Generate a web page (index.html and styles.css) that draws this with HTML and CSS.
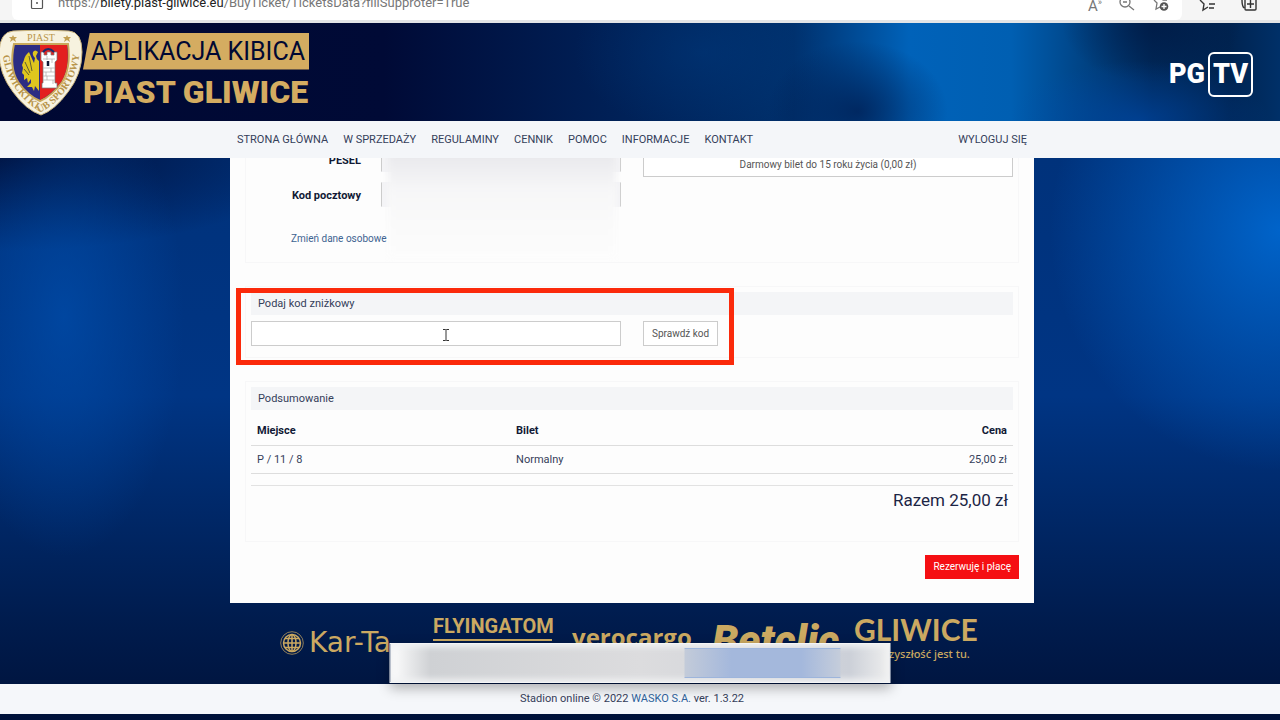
FILE: index.html
```html
<!DOCTYPE html>
<html lang="pl">
<head>
    <meta charset="UTF-8">
    <meta name="viewport" content="width=device-width, initial-scale=1.0">
    <title>Bilety - Piast Gliwice</title>
    <link rel="stylesheet" href="styles.css">
</head>
<body>

    <div class="browser-bar">
        <div class="address">
            <svg class="lock" width="14" height="16" viewBox="0 0 14 16" fill="none" stroke="#555" stroke-width="1.2">
                <path d="M1.5 3v10.5q0 1 1 1h9q1 0 1-1V3"/>
                <circle cx="7" cy="9" r="1" fill="#555" stroke="none"/>
            </svg>
            <span class="url">https://<b>bilety.piast-gliwice.eu</b>/BuyTicket/TicketsData?fillSupproter=True</span>
            <div class="address-icons">
                <span class="read-aloud">A<sup>»</sup></span>
                <svg width="18" height="18" viewBox="0 0 18 18" fill="none" stroke="#777" stroke-width="1.3">
                    <circle cx="7" cy="8" r="5"/><path d="M5 8h4M11 12l5 4"/>
                </svg>
                <svg width="18" height="18" viewBox="0 0 18 18" fill="none" stroke="#777" stroke-width="1.3">
                    <path d="M2 6l3 3-1 6 4-2M9 2l2 4h4"/><circle cx="12" cy="12.5" r="4.3" fill="#555" stroke="none"/><path d="M12 10v5M9.500 12.500h5" stroke="#fff"/>
                </svg>
            </div>
        </div>
        <div class="toolbar-icons">
            <svg width="18" height="18" viewBox="0 0 18 18" fill="none" stroke="#333" stroke-width="1.4">
                <path d="M2 6l4 4-1 6 5-3M11 10h6M11 14h5"/>
            </svg>
            <svg width="18" height="18" viewBox="0 0 18 18" fill="none" stroke="#333" stroke-width="1.4">
                <path d="M5 4h11v11q0 1-1 1H6q-1 0-1-1zM10.500 6v8M7 10h7M2 6q0 6 2 8"/>
            </svg>
        </div>
    </div>

    <header class="banner">
        <div class="brand">
            <svg class="crest" width="83" height="86" viewBox="0 0 83 86">
                <path d="M13 1Q41-1 69 1Q82 2 82 22Q82 44 68 62Q55 80 41 85Q26 80 13 62Q-1 44-1 22Q0 2 13 1Z" fill="#f7f2df" stroke="#c9b27a"/>
                <path d="M14 14H68Q71 38 62 52Q52 66 40 71Q28 66 18 52Q9 38 14 14Z" fill="#2b2c83" stroke="#c9a95b" stroke-width="2"/>
                <path d="M40 15H67Q70 38 61 52Q51 65 40 70Z" fill="#e3201f"/>
                <path d="M38 22q-3-3-5 0q-1 3 2 6l-1 5q-2-4-5-11q-4 3-5 8l-2 5 1 3-1 5 2 2 0 5 3-2 1 5 3-4 0 4-4 4 5 0 2 4 1-5 4 5V31q-3-2-3-5z" fill="#dfc61e"/>
                <path d="M29 26l3 15M25 32l5 11M24 39l5 6" stroke="#625d31" fill="none"/>
                <path d="M41 30v-8h3v3h3v-3h4v3h3v-3h3v8l-2 2v21h2v5H42v-5h1V32z" fill="#fff" stroke="#777" stroke-width=".7"/>
                <path d="M43 22q5-6 11 0" fill="none" stroke="#1a2c69" stroke-width="2"/>
                <path d="M43 29h12M43 38h12M43 42h12M43 46h12M43 50h12M47 26v4M52 29v4M46 42v4M51 38v4M47 46v4M53 50v4" stroke="#aaa" stroke-width=".7"/>
                <path d="M48 31v5" stroke="#101938" stroke-width="2.500"/>
                <path id="crest-arc" d="M2 15Q3 43 18 62Q29 76 41 82Q54 76 66 60Q80 40 80 14" fill="none"/>
                <text x="41" y="11" class="crest-name">PIAST</text>
                <text class="crest-club"><textPath href="#crest-arc" startOffset="50%">GLIWICKI KLUB SPORTOWY</textPath></text>
                <path d="M13 5l1 2h3l-2 2 1 3-3-2-3 2 1-3-2-2h3zM67 5l1 2h3l-2 2 1 3-3-2-3 2 1-3-2-2h3z" fill="#c2a053"/>
            </svg>
            <div class="brand-title">
                <span class="brand-app">APLIKACJA KIBICA</span>
                <span class="brand-club">PIAST GLIWICE</span>
            </div>
        </div>
        <div class="pgtv"><span>PG</span><span class="tv">TV</span></div>
    </header>

    <nav class="menu">
        <div class="menu-inner">
            <a href="#">STRONA GŁÓWNA</a>
            <a href="#">W SPRZEDAŻY</a>
            <a href="#">REGULAMINY</a>
            <a href="#">CENNIK</a>
            <a href="#">POMOC</a>
            <a href="#">INFORMACJE</a>
            <a href="#">KONTAKT</a>
            <a href="#" class="logout">WYLOGUJ SIĘ</a>
        </div>
    </nav>

    <main class="card">
        <section class="panel panel-person">
            <div class="person">
                <label for="pesel">PESEL</label>
                <input type="text" id="pesel">
                <label for="zip">Kod pocztowy</label>
                <input type="text" id="zip">
                <div class="haze"></div>
                <a href="#" class="edit-link">Zmień dane osobowe</a>
            </div>
            <button class="btn ticket-type">Darmowy bilet do 15 roku życia (0,00 zł)</button>
        </section>

        <section class="panel panel-code">
            <div class="panel-title"><label for="code">Podaj kod zniżkowy</label></div>
            <div class="code-row">
                <input type="text" id="code">
                <button class="btn">Sprawdź kod</button>
            </div>
            <div class="highlight"></div>
            <svg class="cursor" width="8" height="14" viewBox="0 0 8 14" fill="none" stroke="#333">
                <path d="M1 1.500h2.500l.5.500.5-.500H7M4 2v10M1 12.500h2.500l.5-.500.5.500H7"/>
            </svg>
        </section>

        <section class="panel panel-summary">
            <div class="panel-title">Podsumowanie</div>
            <table>
                <thead>
                    <tr><th>Miejsce</th><th>Bilet</th><th class="price">Cena</th></tr>
                </thead>
                <tbody>
                    <tr><td>P / 11 / 8</td><td>Normalny</td><td class="price">25,00 zł</td></tr>
                </tbody>
            </table>
            <div class="total">Razem 25,00 zł</div>
        </section>

        <div class="actions">
            <button class="btn btn-pay">Rezerwuję i płacę</button>
        </div>
    </main>

    <div class="sponsors">
        <div class="karta">
            <svg width="24" height="24" viewBox="0 0 24 24" fill="none" stroke="#cba961">
                <circle cx="12" cy="12" r="11.300" stroke-width=".7"/>
                <g stroke-width="1.500"><circle cx="12" cy="12" r="8.500"/><ellipse cx="12" cy="12" rx="4" ry="8.500"/><path d="M12 3v18M3 12h18M5 7.500h14M5 16.500h14"/></g>
            </svg>
            <span>Kar-Ta</span>
        </div>
        <div class="flyingatom">FLYINGATOM</div>
        <div class="verocargo">verocargo</div>
        <div class="betclic">Betclic</div>
        <div class="gliwice">GLIWICE<small>Przyszłość jest tu.</small></div>
    </div>

    <footer>
        <p>Stadion online © 2022 <a href="#">WASKO S.A.</a> ver. 1.3.22</p>
    </footer>

    <div class="share-bar"><div class="share-blue"></div></div>

</body>
</html>
```

FILE: styles.css
```css
* {
    margin: 0;
    padding: 0;
    box-sizing: border-box;
}

body {
    min-height: 100vh;
    font-family: Roboto, "Noto Sans", sans-serif;
    font-size: 11px;
    line-height: 16px;
    color: #35405a;
    background:
        radial-gradient(ellipse 230px 240px at 100% 32%, rgba(0, 108, 215, 0.85), transparent),
        radial-gradient(ellipse 120px 240px at 5% 44%, rgba(0, 82, 180, 0.6), transparent),
        radial-gradient(ellipse 320px 100px at 0% 21%, rgba(0, 5, 40, 0.8), transparent),
        linear-gradient(#003075, #003584 55%, #001c4e 86%, #00123a);
}

a {
    color: inherit;
    text-decoration: none;
}

/* browser strip */
.browser-bar {
    height: 23px;
    display: flex;
    background: #f5f5f5;
    border-bottom: 3px solid #e2e4e6;
    overflow: hidden;
}

.address {
    flex: 1;
    display: flex;
    margin-left: 12px;
    padding: 0 12px 0 18px;
    background: #fff;
    border-radius: 0 0 6px 6px;
}

.lock {
    margin-top: -6px;
}

.url {
    margin: -5px auto 0 14px;
    font-size: 13px;
    color: #777;
}

.url b {
    font-weight: 400;
    color: #222;
}

.address-icons,
.toolbar-icons {
    display: flex;
    gap: 16px;
    margin-top: -6px;
}

.read-aloud {
    font-size: 15px;
    color: #777;
}

.read-aloud sup {
    font-size: 9px;
}

.toolbar-icons {
    gap: 24px;
    padding: 0 22px 0 16px;
}

/* banner */
.banner {
    height: 98px;
    display: flex;
    align-items: center;
    justify-content: space-between;
    padding-right: 27px;
    background:
        radial-gradient(ellipse 130px 60px at 89% 100%, rgba(0, 75, 175, 0.6), transparent),
        radial-gradient(ellipse 90px 60px at 90% 0%, rgba(0, 20, 60, 0.6), transparent),
        radial-gradient(ellipse 90px 70px at 67% 90%, rgba(0, 25, 75, 0.7), transparent),
        radial-gradient(ellipse 130px 80px at 55% 30%, rgba(0, 60, 130, 0.4), transparent),
        linear-gradient(90deg, #000833, #000a36 30%, #001d52 45%, #00306c 62%, #0062b9 71%, #005fb2 79%, #00295a 90%, #002350 96%, #003068);
}

.brand {
    display: flex;
    align-items: center;
}

.crest {
    margin-top: 2px;
}

.crest-name {
    font: 10px "Liberation Serif", serif;
    text-anchor: middle;
    fill: #b8954b;
}

.crest-club {
    font: bold 10px "Liberation Serif", serif;
    text-anchor: middle;
    fill: #b8954b;
}

.brand-title {
    display: flex;
    flex-direction: column;
    padding-top: 3px;
    white-space: nowrap;
}

.brand-app {
    width: 226px;
    height: 37px;
    padding-right: 4px;
    background: #d4ac61;
    clip-path: polygon(3% 0, 100% 0, 100% 100%, 0 100%);
    color: #000833;
    font-size: 25px;
    line-height: 37px;
    text-align: right;
}

.brand-club {
    height: 45px;
    color: #d4ac61;
    font-size: 32px;
    font-weight: 900;
    line-height: 45px;
}

.pgtv {
    display: flex;
    align-items: center;
    gap: 3px;
    margin-top: 4px;
    color: #fff;
    font: 900 27px Roboto, sans-serif;
}

.tv {
    height: 45px;
    padding: 0 3px;
    border: 2px solid #fff;
    border-radius: 6px;
    line-height: 41px;
}

/* menu */
.menu {
    position: relative;
    z-index: 2;
    height: 37px;
    padding-right: 16px;
    background: #f4f6f9;
}

.menu-inner {
    display: flex;
    gap: 15px;
    max-width: 790px;
    margin: 0 auto;
    line-height: 37px;
}

.logout {
    margin-left: auto;
}

/* card */
.card {
    max-width: 820px;
    margin: 0 auto;
    padding: 0 15px 24px;
    border-right: 16px solid transparent;
    background: #fdfdfd;
    background-clip: padding-box;
    overflow: hidden;
}

.panel {
    position: relative;
    margin-bottom: 23px;
    padding: 5px;
    border: 1px solid #f7f7f8;
}

.panel-title {
    height: 23px;
    padding-left: 7px;
    background: #f4f5f7;
    line-height: 23px;
}

input {
    width: 100%;
    height: 25px;
    border: 1px solid #ccc;
    background: #fff;
}

.btn {
    height: 25px;
    padding: 0 8px;
    border: 1px solid #ccc;
    background: #fff;
    color: #555;
    font: 10px Roboto, sans-serif;
}

.panel-person,
.code-row {
    display: grid;
    grid-template-columns: 1fr 1fr;
    gap: 22px;
}

.panel-person {
    min-height: 117px;
    margin-top: -12px;
    padding-top: 0;
}

.person {
    position: relative;
    display: grid;
    grid-template-columns: 110px 1fr;
    align-content: start;
    align-items: center;
    gap: 10px 20px;
}

.person label {
    padding-top: 2px;
    color: #111a35;
    font-weight: bold;
    text-align: right;
}

.person input {
    background: #f4f4f6;
    border-top-color: transparent;
    border-bottom-color: transparent;
}

.edit-link {
    position: relative;
    grid-column: 1 / 3;
    margin: 14px 0 0 40px;
    color: #3e6391;
    font-size: 10px;
}

.haze {
    position: absolute;
    top: 0;
    right: 5px;
    bottom: 0;
    width: 228px;
    background: linear-gradient(#e6e6ea, #f7f7f8 40%, #fafafa 70%, #fcfcfc);
    filter: blur(3px);
}

.ticket-type {
    margin-top: 5px;
}

.code-row {
    padding: 6px 0;
}

.code-row .btn {
    justify-self: start;
}

.highlight {
    position: absolute;
    top: 1px;
    left: -10px;
    width: 498px;
    height: 77px;
    border: 5px solid #fb2a0b;
}

.cursor {
    position: absolute;
    top: 41px;
    left: 196px;
}

/* summary */
table {
    width: 100%;
    border-collapse: collapse;
    table-layout: fixed;
}

th,
td {
    height: 28px;
    padding: 1px 6px 0;
    border-bottom: 1px solid #ddd;
    text-align: left;
}

th {
    height: 35px;
    padding-top: 8px;
    color: #111a35;
}

.price {
    text-align: right;
}

th:first-child {
    width: 34%;
}

.total {
    height: 51px;
    margin-top: 11px;
    padding: 5px;
    border-top: 1px solid #e2e2e2;
    color: #1c2545;
    font-size: 17px;
    line-height: 18px;
    text-align: right;
}

.panel-summary {
    margin-bottom: 13px;
}

.actions {
    display: flex;
    justify-content: flex-end;
}

.btn-pay {
    height: 24px;
    border: 0;
    background: #f50f13;
    color: #fff;
}

/* sponsors */
.sponsors {
    display: flex;
    align-items: flex-start;
    gap: 20px;
    max-width: 720px;
    height: 81px;
    margin: 0 auto;
    padding-right: 16px;
    color: #cba961;
    white-space: nowrap;
}

.karta {
    display: flex;
    align-items: center;
    gap: 5px;
    width: 133px;
    margin-top: 24px;
    font: 28px/32px "DejaVu Sans", sans-serif;
}

.flyingatom {
    width: 119px;
    margin-top: 10px;
    border-bottom: 2px solid #cba961;
    font: bold 20px/26px Roboto, sans-serif;
}

.verocargo {
    width: 120px;
    margin-top: 20px;
    font: bold 24px/28px "Open Sans", sans-serif;
}

.betclic {
    width: 122px;
    margin-top: 20px;
    font: italic 900 42px/36px Roboto, sans-serif;
}

.gliwice {
    display: flex;
    flex-direction: column;
    gap: 2px;
    margin-top: 10px;
    font: bold 30px/32px Lato, sans-serif;
}

.gliwice small {
    padding-right: 8px;
    font: 500 11px/14px "Noto Sans", sans-serif;
    text-align: right;
}

footer {
    height: 30px;
    margin-bottom: 6px;
    padding-right: 16px;
    background: #f5f7fa;
    line-height: 30px;
    text-align: center;
}

footer a {
    color: #2f639c;
}

/* blurred sharing bar over the page */
.share-bar {
    position: fixed;
    bottom: 37px;
    left: 50%;
    width: 501px;
    height: 40px;
    transform: translateX(-50%);
    border: 1px solid #f4f5f6;
    background: linear-gradient(90deg, #fff, #cfd1d4 8%, #dcdcde 50%, #ccd0d8 92%, #eee);
    box-shadow: inset 0 0 6px 3px #f1f2f3, 0 5px 12px rgba(0, 0, 0, 0.3);
}

.share-blue {
    width: 156px;
    height: 30px;
    margin: 4px 0 0 294px;
    background: linear-gradient(90deg, #c3cbd9, #a4b8dc 30%, #a4b8dc 75%, #c5cddb);
    border: solid #9db5dc;
    border-width: 1px 0;
}
```
